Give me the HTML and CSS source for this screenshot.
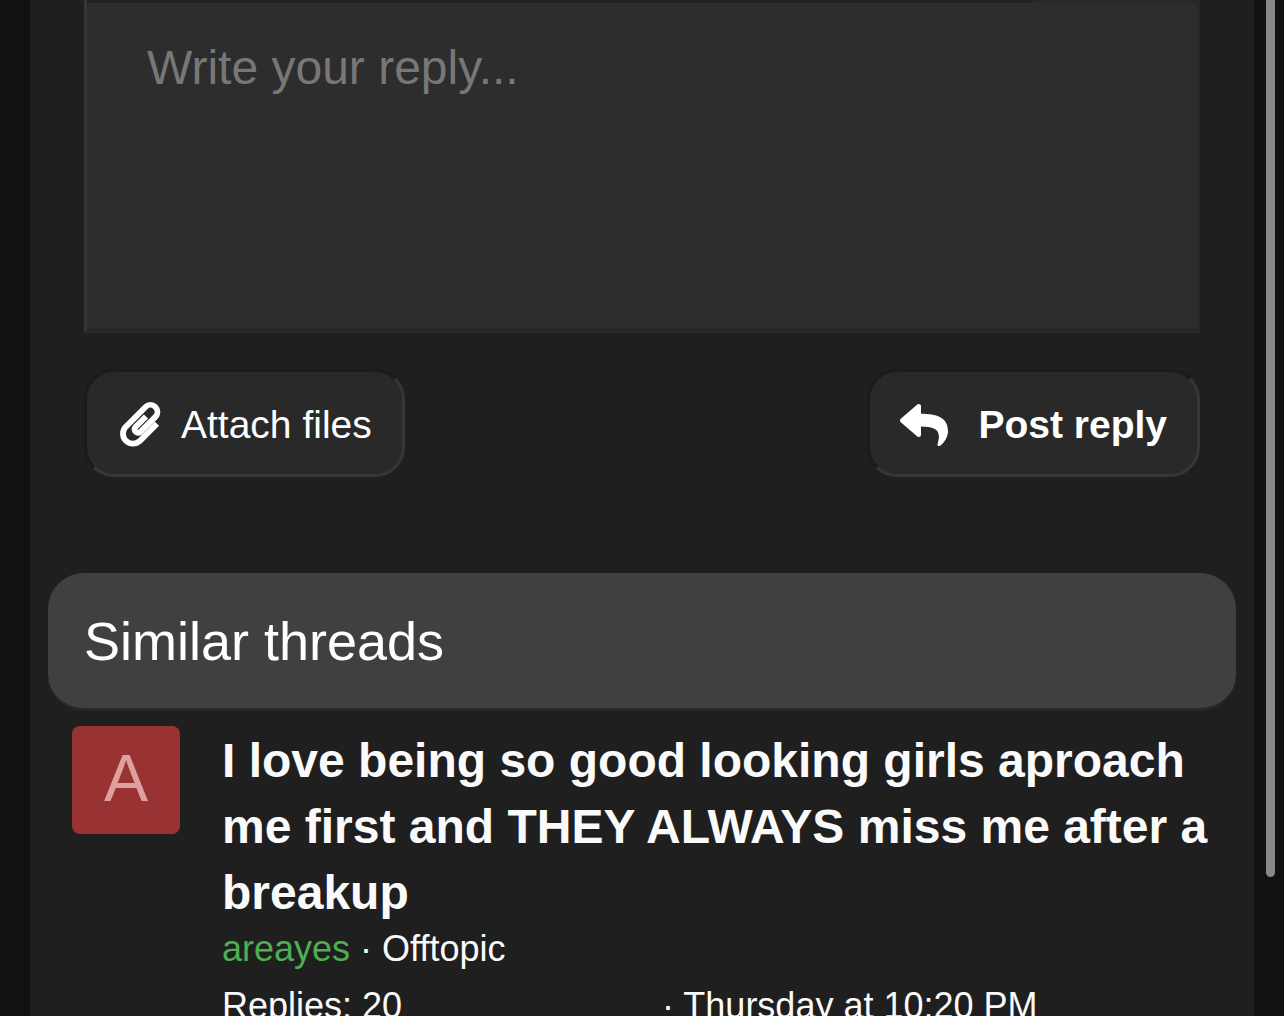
FILE: index.html
```html
<!DOCTYPE html>
<html lang="en">
<head>
<meta charset="utf-8">
<meta name="viewport" content="width=device-width, initial-scale=1">
<title>Thread</title>
<link rel="stylesheet" href="styles.css">
</head>
<body>
<main class="page">
  <form class="reply">
    <div class="toolbar"><span class="toolbar-main"></span><span class="toolbar-tab"></span></div>
    <textarea class="editor" aria-label="Write your reply" placeholder="Write your reply..."></textarea>
    <div class="actions">
      <button class="button button-attach" type="button">
        <svg class="icon-clip" viewBox="0 0 42 48" aria-hidden="true"><path fill="none" stroke="currentColor" stroke-width="5.8" d="M38 22.8L20.5 40.3A10 10 0 0 1 6.4 26.2L26.5 6A7 7 0 0 1 36.4 15.9L21.2 31.1A3.5 3.5 0 0 1 16.3 26.2L27 15.5"/></svg>
        <span>Attach files</span>
      </button>
      <button class="button button-post" type="submit">
        <svg class="icon-reply" viewBox="0 0 512 512" aria-hidden="true"><path fill="currentColor" d="M8.309 189.836L184.313 37.851C199.719 24.546 224 35.347 224 56.015v80.053c160.629 1.839 288 34.032 288 186.258 0 61.441-39.581 122.309-83.333 154.132-13.653 9.931-33.111-2.533-28.077-18.631 45.344-145.012-21.507-183.51-176.59-185.742V360c0 20.7-24.3 31.453-39.687 18.164l-176.004-152c-11.071-9.562-11.086-26.753 0-36.328z"/></svg>
        <span>Post reply</span>
      </button>
    </div>
  </form>
  <section class="similar">
    <h2 class="similar-title">Similar threads</h2>
    <article class="thread">
      <a class="avatar" href="#">A</a>
      <div class="thread-body">
        <h3 class="thread-title"><a href="#">I love being so good looking girls aproach me first and THEY ALWAYS miss me after a breakup</a></h3>
        <p class="meta"><a class="author" href="#">areayes</a> · <a href="#">Offtopic</a></p>
        <div class="meta stats"><span>Replies: 20</span><span>· <a href="#">Thursday at 10:20 PM</a></span></div>
      </div>
    </article>
  </section>
</main>
<div class="scroll-thumb"></div>
</body>
</html>
```
FILE: styles.css
```css
* {
  box-sizing: border-box;
}

html {
  height: 100%;
  overflow: hidden;
}

body {
  height: 100%;
  margin: 0;
  padding: 0 30px;
  overflow: hidden;
  background: #111;
  color: #fafafa;
  font-family: "Liberation Sans", Arial, sans-serif;
}

a {
  color: inherit;
  text-decoration: none;
}

.page {
  min-height: 100%;
  padding: 0 18px;
  background: #1f1f1f;
}

.reply {
  padding: 0 36px;
}

.toolbar {
  display: flex;
  height: 3px;
  border-left: 3px solid #363636;
}

.toolbar-main {
  flex: 17;
  background: #222;
}

.toolbar-tab {
  flex: 3;
  background: #282828;
}

.editor {
  display: block;
  width: 100%;
  height: 330px;
  margin: 0;
  padding: 36px 60px;
  resize: none;
  border: 3px solid #282828;
  border-top: 0;
  border-left-color: #363636;
  border-radius: 0;
  outline: 0;
  background: #2d2d2d;
  box-shadow: inset 0 -1px #222;
  color: #fafafa;
  font: 48px/58px "Liberation Sans", Arial, sans-serif;
}

.editor::placeholder {
  color: #777;
  opacity: 1;
}

.actions {
  display: flex;
  justify-content: space-between;
  margin-top: 36px;
}

.button {
  display: flex;
  align-items: center;
  height: 108px;
  padding: 4px 30px 0;
  border: 3px solid;
  border-color: #1b1b1b #363636 #363636 #1b1b1b;
  border-radius: 30px;
  background: #292929;
  color: #fff;
  font: 39px/54px "Liberation Sans", Arial, sans-serif;
}

.button-attach {
  gap: 20px;
  padding-left: 32px;
}

.button-post {
  gap: 30px;
  font-weight: bold;
}

.icon-clip {
  width: 42px;
  height: 48px;
}

.icon-reply {
  width: 48px;
  height: 48px;
}

.similar {
  margin-top: 96px;
}

.similar-title {
  margin: 0;
  padding: 31px 36px 29px;
  border-bottom: 3px solid #272727;
  border-radius: 36px;
  background: #404040;
  color: #fff;
  font-size: 54px;
  font-weight: normal;
  line-height: 75px;
}

.thread {
  display: flex;
  gap: 42px;
  padding: 15px 24px;
}

.avatar {
  flex: none;
  width: 108px;
  height: 108px;
  border-radius: 8px;
  background: #933;
  color: #df9f9f;
  font-size: 66px;
  line-height: 104px;
  text-align: center;
}

.thread-body {
  flex: 1;
  min-width: 0;
  padding-top: 2px;
}

.thread-title {
  margin: 0;
  font-size: 48px;
  line-height: 66px;
}

.meta {
  margin: 0 0 12px;
  font-size: 36px;
  line-height: 45px;
}

.author {
  color: #4caf50;
}

.stats {
  display: grid;
  grid-template-columns: 4fr 5fr;
}

.scroll-thumb {
  position: fixed;
  top: 0;
  right: 9px;
  width: 9px;
  height: 877px;
  border-radius: 0 0 5px 5px;
  background: #888;
}
```
